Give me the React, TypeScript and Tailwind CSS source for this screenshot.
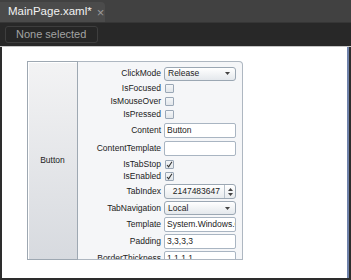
import React from 'react';

const font = { fontFamily: '"Liberation Sans", Arial, sans-serif' };

function Label({ children }: { children: React.ReactNode }) {
  return (
    <div className="flex items-center justify-end whitespace-nowrap text-[8.5px] text-[#222]">
      {children}
    </div>
  );
}

function Check({ checked }: { checked?: boolean }) {
  return (
    <div className="flex items-center">
      <div className="ml-[1px] flex h-[9px] w-[9px] items-center justify-center rounded-[1px] border border-[#9aa7b6] bg-gradient-to-b from-[#f4f6f8] to-[#e2e6ea]">
        {checked && (
          <svg width="7" height="7" viewBox="0 0 7 7">
            <path d="M1 4 L2.6 5.8 L6 0.8" fill="none" stroke="#333" strokeWidth="1.1" />
          </svg>
        )}
      </div>
    </div>
  );
}

function TextBox({ value }: { value?: string }) {
  return (
    <div className="flex items-center">
      <div className="flex h-[15px] w-full items-center overflow-hidden whitespace-nowrap rounded-[2px] border border-[#a9b5c2] bg-white pl-[2px] text-[8.5px] text-[#222]">
        {value}
      </div>
    </div>
  );
}

function Combo({ value }: { value: string }) {
  return (
    <div className="flex items-center">
      <div className="flex h-[14px] w-full items-center justify-between rounded-[3px] border border-[#9ba7b3] bg-gradient-to-b from-[#ffffff] to-[#e4e8ec] pl-[3px] pr-[5px] text-[8.5px] text-[#222]">
        <span>{value}</span>
        <svg width="5" height="3" viewBox="0 0 5 3">
          <path d="M0 0 H5 L2.5 3 Z" fill="#444" />
        </svg>
      </div>
    </div>
  );
}

function Numeric({ value }: { value: string }) {
  return (
    <div className="flex items-center">
      <div className="flex h-[15px] w-full items-center overflow-hidden rounded-[3px] border border-[#9ba7b3] bg-gradient-to-b from-[#ffffff] to-[#e8ebee]">
        <span className="flex-1 pr-[4px] text-right text-[8.5px] text-[#222]">{value}</span>
        <div className="flex h-full w-[11px] flex-col items-center justify-center gap-[2px] border-l border-[#b8c1ca]">
          <svg width="5" height="3" viewBox="0 0 5 3">
            <path d="M0 3 H5 L2.5 0 Z" fill="#444" />
          </svg>
          <svg width="5" height="3" viewBox="0 0 5 3">
            <path d="M0 0 H5 L2.5 3 Z" fill="#444" />
          </svg>
        </div>
      </div>
    </div>
  );
}

const rows: { label: string; h: string; el: React.ReactNode }[] = [
  { label: 'ClickMode', h: 'h-[17px]', el: <Combo value="Release" /> },
  { label: 'IsFocused', h: 'h-[13px]', el: <Check /> },
  { label: 'IsMouseOver', h: 'h-[13px]', el: <Check /> },
  { label: 'IsPressed', h: 'h-[13px]', el: <Check /> },
  { label: 'Content', h: 'h-[18px]', el: <TextBox value="Button" /> },
  { label: 'ContentTemplate', h: 'h-[19px]', el: <TextBox /> },
  { label: 'IsTabStop', h: 'h-[12px]', el: <Check checked /> },
  { label: 'IsEnabled', h: 'h-[13px]', el: <Check checked /> },
  { label: 'TabIndex', h: 'h-[17px]', el: <Numeric value="2147483647" /> },
  { label: 'TabNavigation', h: 'h-[16px]', el: <Combo value="Local" /> },
  { label: 'Template', h: 'h-[17px]', el: <TextBox value="System.Windows.Controls.ControlTemplate" /> },
  { label: 'Padding', h: 'h-[17px]', el: <TextBox value="3,3,3,3" /> },
  { label: 'BorderThickness', h: 'h-[17px]', el: <TextBox value="1,1,1,1" /> },
];

export default function App() {
  return (
    <div className="flex h-[280px] w-[351px] flex-col overflow-hidden bg-[#2b2b2b]" style={font}>
      {/* document tab strip */}
      <div className="flex h-[22px] items-end bg-[#414141]">
        <div className="flex h-[20px] w-[105px] items-center rounded-tr-[4px] bg-[#4b4b4b] pl-[8px] text-[11.5px] text-[#f2f2f2]">
          <span>MainPage.xaml*</span>
          <span className="ml-[5px] text-[13px] leading-none text-[#9a9a9a]">×</span>
        </div>
      </div>

      {/* toolbar */}
      <div className="flex h-[24px] items-center border-t border-[#363636] bg-[#282828] pl-[5px]">
        <div className="flex h-[17px] w-[93px] items-center rounded-[3px] border border-[#3e3e3e] bg-[#262626] pl-[10px] text-[11px] text-[#a3a3a3]">
          None selected
        </div>
      </div>
      <div className="h-[1px] bg-[#c6c6c6]" />

      {/* design surface */}
      <div className="flex flex-1 border-l-2 border-[#2d2d2d]">
        <div className="flex-1 bg-white pl-[25px] pt-[14px]">
          <div className="flex h-[199px]">
            <div className="flex w-[51px] items-center justify-center border border-[#9ea8b2] bg-gradient-to-b from-[#f3f3f4] to-[#d7dadf] text-[8.5px] text-[#222] shadow-[inset_1px_1px_0_#fff]">
              Button
            </div>
            <div className="w-[165px] overflow-hidden rounded-tr-[4px] border-y border-r border-[#aeb7c1] bg-[#f5f6f8] pt-[3px]">
              <div className="grid grid-cols-[83px_72px] gap-x-[3px]">
                {rows.map((r) => (
                  <React.Fragment key={r.label}>
                    <div className={`${r.h} flex justify-end`}>
                      <Label>{r.label}</Label>
                    </div>
                    <div className={`${r.h} flex flex-col justify-center`}>{r.el}</div>
                  </React.Fragment>
                ))}
              </div>
            </div>
          </div>
        </div>
        <div className="w-[2px] bg-[#6f82aa]" />
        <div className="w-[2px] bg-[#2d2d2d]" />
      </div>
      <div className="h-[2px] bg-[#2d2d2d]" />
    </div>
  );
}
